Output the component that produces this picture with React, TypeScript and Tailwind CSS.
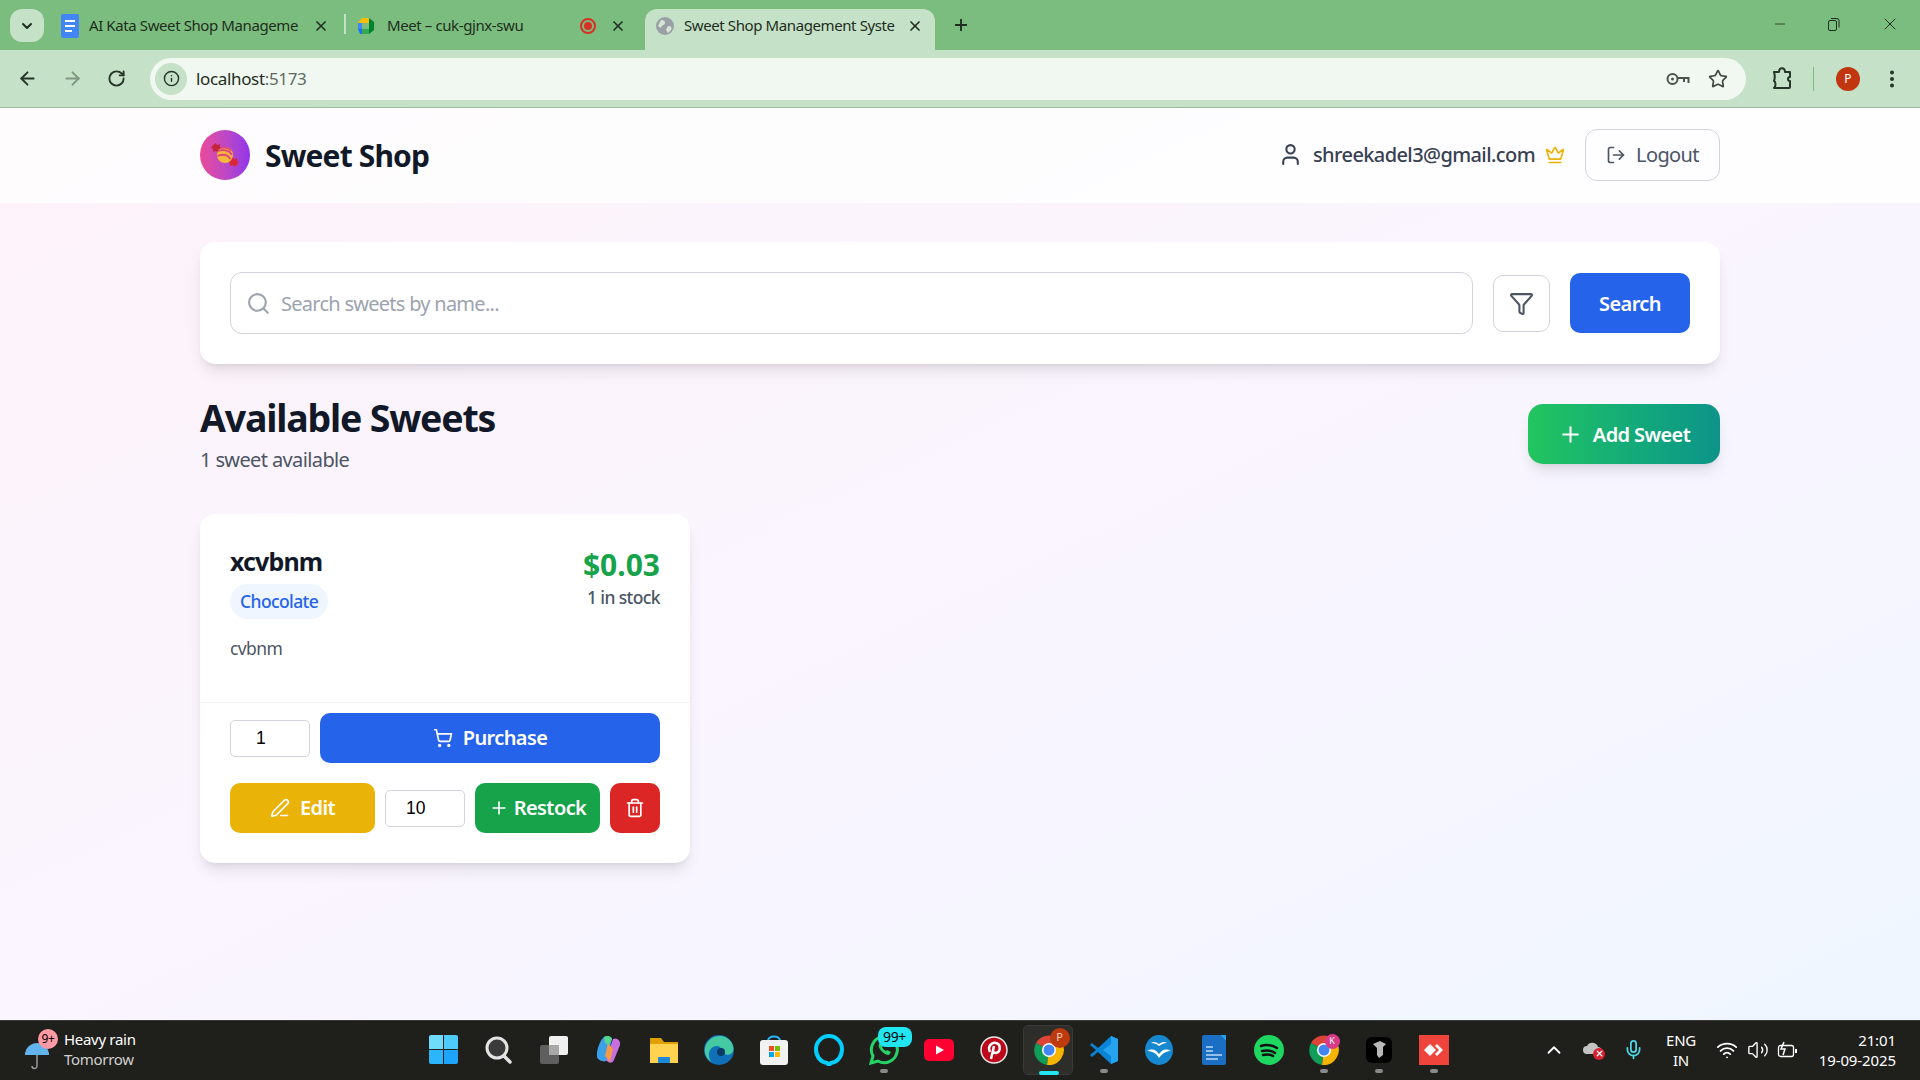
import { ArrowLeft, ArrowRight, ChevronDown, ChevronUp, Crown, Filter, Info, LogOut, Mic, Minus, MoreVertical, PenLine, Plus, RotateCw, Search, ShoppingCart, Star, Trash2, User, Volume2, Wifi, X } from "lucide-react";

const uiFont = { fontFamily: '"Noto Sans", sans-serif' };
const digitFont = { fontFamily: '"Liberation Sans", sans-serif' };

function Candy() {
  return (
    <svg width="30" height="30" viewBox="0 0 30 30">
      <path d="M3 5l3-2 1 2 3-1 0 3 3 2-4 5-3-3-3 1 0-3-2-1z" fill="#c2263f" />
      <path d="M27 25l-3 2-1-2-3 1 0-3-3-2 4-5 3 3 3-1 0 3 2 1z" fill="#d92638" />
      <circle cx="15" cy="15" r="8" fill="#f6b93b" />
      <path d="M8 11c5-2 11-1 14 4M7.500 16c5-2 10-2 13 3M11 8c4-1 8 0 10 3" stroke="#e0457b" strokeWidth="1.800" fill="none" />
    </svg>
  );
}

function TabsBar() {
  return (
    <div className="flex h-[50px] items-end bg-[#7bbd7e] pl-[10px] text-[15px] tracking-[-0.4px] text-[#1f2d20]">
      <div className="mb-[8px] flex h-[33px] w-[34px] items-center justify-center rounded-[12px] bg-[#c5e1c7]">
        <ChevronDown size={16} strokeWidth={3} />
      </div>
      <div className="flex h-[41px] w-[300px] items-center pb-[8px] pl-[17px]">
        <svg width="18" height="24" viewBox="0 0 18 24" className="shrink-0">
          <rect width="18" height="24" rx="2" fill="#4285f4" />
          <path d="M4 7h10M4 12h10M4 17h7" stroke="#fff" strokeWidth="2" />
        </svg>
        <span className="ml-[10px] w-[220px] whitespace-nowrap">AI Kata Sweet Shop Manageme</span>
        <X size={16} strokeWidth={2.5} className="ml-[4px]" />
      </div>
      <div className="mb-[16px] h-[20px] w-[2px] bg-[#c5e1c7]" />
      <div className="flex h-[41px] w-[299px] items-center pb-[8px] pl-[11px]">
        <svg width="18" height="18" viewBox="0 0 18 18" className="shrink-0">
          <path d="M5 1h7v5H1z" fill="#fbbc04" />
          <path d="M1 6h4v6H1z" fill="#4285f4" />
          <path d="M1 12h4v5H3z" fill="#1a73e8" />
          <path d="M5 12h7v5H5z" fill="#34a853" />
          <path d="M12 1v16l5-4V5z" fill="#00832d" />
        </svg>
        <span className="ml-[12px] w-[190px] whitespace-nowrap">Meet – cuk-gjnx-swu</span>
        <span className="ml-[3px] flex h-[16px] w-[16px] items-center justify-center rounded-full border-2 border-[#d93025]">
          <span className="h-[8px] w-[8px] rounded-full bg-[#d93025]" />
        </span>
        <X size={16} strokeWidth={2.5} className="ml-[14px]" />
      </div>
      <div className="flex h-[41px] w-[290px] items-center rounded-t-[12px] bg-[#c5e1c7] pb-[8px] pl-[11px]">
        <svg width="18" height="18" viewBox="0 0 18 18" className="shrink-0">
          <circle cx="9" cy="9" r="9" fill="#9aa0a6" />
          <path d="M5 3c3 0 4 1 4 3s-4 2-4 5l-3-2zM12 9c3 0 4 1 3 4l-3 3-2-3z" fill="#d5e6d6" />
        </svg>
        <span className="ml-[10px] w-[208px] whitespace-nowrap">Sweet Shop Management Syste</span>
        <X size={16} strokeWidth={2.5} className="ml-[15px]" />
      </div>
      <Plus size={18} strokeWidth={2.5} className="mb-[16px] ml-[17px]" />
      <div className="ml-auto flex h-[50px] items-center gap-[39px] pb-[2px] pr-[20px]">
        <Minus size={16} strokeWidth={1.2} />
        <svg width="14" height="14" viewBox="0 0 14 14" fill="none" stroke="#1f2d20">
          <rect x="1.5" y="3.5" width="8" height="10" rx="1.5" />
          <path d="M4 1.5h6a2 2 0 0 1 2 2v7" />
        </svg>
        <X size={20} strokeWidth={1.2} />
      </div>
    </div>
  );
}

function Toolbar() {
  return (
    <div className="flex h-[58px] items-center border-b border-[#9db8a0] bg-[#c5e1c7] text-[#26352a]">
      <div className="flex w-[150px] items-center gap-[24px] pl-[17px]">
        <ArrowLeft size={21} strokeWidth={2.2} />
        <ArrowRight size={21} strokeWidth={2.2} className="text-[#7f9683]" />
        <RotateCw size={19} strokeWidth={2.4} />
      </div>
      <div className="flex h-[42px] w-[1596px] items-center rounded-full bg-[#f1f8f2] pl-[5px] pr-[18px]">
        <span className="flex h-[32px] w-[32px] items-center justify-center rounded-full bg-[#c5e1c7]">
          <Info size={17} strokeWidth={2} />
        </span>
        <span className="ml-[9px] text-[17px] tracking-[-0.35px] text-[#1f2d20]">
          localhost<span className="text-[#5d6b60]">:5173</span>
        </span>
        <svg width="24" height="14" viewBox="0 0 24 14" fill="none" stroke="#4a524c" strokeWidth="2" className="ml-auto">
          <circle cx="6.500" cy="7" r="5" />
          <circle cx="6.500" cy="7" r="1.500" fill="#4a524c" stroke="none" />
          <path d="M11.500 6H22.500V11M18 6V10" />
        </svg>
        <Star size={20} strokeWidth={2} className="ml-[18px] text-[#3f4741]" />
      </div>
      <svg width="22" height="24" viewBox="0 0 22 24" fill="none" stroke="#26352a" strokeWidth="2" className="ml-[25px]">
        <path d="M3 5h5c0-5 6-5 6 0h5v5c-1 0-2 0-2 2s1 2 2 2v6a1 1 0 0 1-1 1H3c2-2 2-6 0-7 1-3 1-6 0-9z" strokeLinejoin="round" />
      </svg>
      <div className="ml-[20px] h-[24px] w-[1px] bg-[#7bbd7e]" />
      <span className="ml-[22px] flex h-[24px] w-[24px] items-center justify-center rounded-full bg-[#c1360f] text-[12px] text-white">P</span>
      <MoreVertical size={22} strokeWidth={2.4} className="ml-[21px]" />
    </div>
  );
}

function Shop() {
  return (
    <div className="flex-1 bg-gradient-to-br from-[#fdf2f8] via-[#faf5ff] to-[#eff6ff] tracking-[-0.6px] text-[#111827]">
      <header className="h-[95px] bg-white/80">
        <div className="mx-auto flex h-full w-[1520px] items-center pb-[2px]">
          <div className="flex h-[50px] w-[50px] items-center justify-center rounded-full bg-gradient-to-r from-[#ec4899] to-[#9333ea]">
            <Candy />
          </div>
          <h1 className="ml-[15px] mt-[2px] text-[30px] font-bold tracking-[-0.85px]">Sweet Shop</h1>
          <User size={25} strokeWidth={2} className="ml-auto text-[#374151]" />
          <span className="ml-[10px] mt-[1px] text-[20px] font-medium text-[#374151]">shreekadel3@gmail.com</span>
          <Crown size={20} strokeWidth={2} className="ml-[10px] text-[#eab308]" />
          <button className="ml-[20px] flex h-[52px] w-[135px] items-center justify-center gap-[10px] rounded-[12px] border border-[#d1d5db] text-[20px] text-[#4b5563]">
            <LogOut size={20} />
            <span className="mt-[1px]">Logout</span>
          </button>
        </div>
      </header>

      <main className="mx-auto w-[1520px] pt-[39px]">
        <section className="flex h-[122px] items-center rounded-[15px] bg-white px-[30px] shadow-lg">
          <div className="flex h-[62px] flex-1 items-center rounded-[12px] border border-[#d1d5db] pl-[15px]">
            <Search size={25} className="text-[#9ca3af]" />
            <span className="ml-[10px] mt-[1px] text-[20px] tracking-[-0.73px] text-[#9ca3af]">Search sweets by name...</span>
          </div>
          <button className="ml-[20px] flex h-[57px] w-[57px] items-center justify-center rounded-[10px] border border-[#d1d5db] text-[#4b5563]">
            <Filter size={25} />
          </button>
          <button className="ml-[20px] h-[60px] w-[120px] rounded-[10px] bg-[#2563eb] pt-[1px] text-[20px] font-semibold text-white">Search</button>
        </section>

        <div className="mt-[31px] flex items-start justify-between">
          <div>
            <h2 className="text-[37.5px] leading-[45px] font-bold tracking-[-1.2px]">Available Sweets</h2>
            <p className="mt-[5px] text-[20px] leading-[30px] tracking-[-0.62px] text-[#4b5563]">1 sweet available</p>
          </div>
          <button className="mt-[9px] flex h-[60px] w-[192px] items-center justify-center gap-[10px] rounded-[15px] bg-gradient-to-r from-[#22c55e] to-[#0d9488] text-[20px] font-semibold text-white shadow-lg">
            <Plus size={25} strokeWidth={2} />
            <span className="mt-[1px]">Add Sweet</span>
          </button>
        </div>

        <article className="mt-[39px] w-[490px] rounded-[15px] bg-white shadow-lg">
          <div className="flex h-[189px] justify-between border-b border-[#f3f4f6] px-[30px] pt-[30px]">
            <div>
              <h3 className="text-[25px] leading-[34px] font-bold tracking-[-0.88px]">xcvbnm</h3>
              <span className="mt-[6px] inline-block rounded-full bg-[#eff6ff] px-[10px] text-[17.5px] leading-[35px] font-medium text-[#2563eb]">Chocolate</span>
              <p className="mt-[15px] text-[17.5px] leading-[28px] text-[#4b5563]">cvbnm</p>
            </div>
            <div className="text-right">
              <div className="text-[30px] leading-[41px] font-bold tracking-normal text-[#16a34a]">$0.03</div>
              <div className="text-[17.5px] leading-[24px] font-medium text-[#4b5563]">1 in stock</div>
            </div>
          </div>
          <div className="px-[30px] pt-[10px] pb-[30px]">
            <div className="flex items-center gap-[10px]">
              <div className="flex h-[37px] w-[80px] items-center rounded-[5px] border border-[#d1d5db] pl-[25px] text-[17.5px] tracking-normal text-black" style={digitFont}>1</div>
              <button className="flex h-[50px] flex-1 items-center justify-center gap-[10px] rounded-[10px] bg-[#2563eb] text-[20px] font-semibold text-white">
                <ShoppingCart size={20} />
                Purchase
              </button>
            </div>
            <div className="mt-[20px] flex items-center gap-[10px]">
              <button className="flex h-[50px] w-[145px] items-center justify-center gap-[10px] rounded-[10px] bg-[#eab308] text-[20px] font-semibold text-white">
                <PenLine size={20} />
                Edit
              </button>
              <div className="flex h-[37px] w-[80px] items-center rounded-[5px] border border-[#d1d5db] pl-[20px] text-[17.5px] tracking-normal text-black" style={digitFont}>10</div>
              <button className="flex h-[50px] w-[125px] items-center justify-center gap-[5px] rounded-[10px] bg-[#16a34a] text-[20px] font-semibold text-white">
                <Plus size={20} />
                Restock
              </button>
              <button className="flex h-[50px] w-[50px] items-center justify-center rounded-[10px] bg-[#dc2626] text-white">
                <Trash2 size={20} />
              </button>
            </div>
          </div>
        </article>
      </main>
    </div>
  );
}

function Dot() {
  return <span className="absolute bottom-[-8px] left-1/2 h-[4px] w-[8px] -translate-x-1/2 rounded-full bg-[#8a8a8a]" />;
}

function TaskIcon({ children, dot }: { children: React.ReactNode; dot?: boolean }) {
  return (
    <div className="relative flex h-[59px] w-[55px] items-center justify-center pb-[2px]">
      <div className="relative flex h-[30px] w-[30px] items-center justify-center">
        {children}
        {dot && <Dot />}
      </div>
    </div>
  );
}

function ChromeLogo() {
  return (
    <svg width="30" height="30" viewBox="0 0 30 30">
      <path d="M15 15L2 8a15 15 0 0 1 26 0z" fill="#db4437" />
      <path d="M15 15L2 8a15 15 0 0 0 11 22z" fill="#0f9d58" />
      <path d="M15 15l13-7a15 15 0 0 1-15 22z" fill="#f4b400" />
      <circle cx="15" cy="15" r="7" fill="#fff" />
      <circle cx="15" cy="15" r="5.500" fill="#4285f4" />
    </svg>
  );
}

function Taskbar() {
  return (
    <footer className="flex h-[60px] items-center border-t border-[#3a3a3a] bg-[#1f1f1c] tracking-[-0.3px] text-white">
      <div className="flex w-[416px] items-center pb-[3px] pl-[24px]">
        <div className="relative h-[38px] w-[40px]">
          <svg width="26" height="28" viewBox="0 0 26 28" className="absolute top-[12px] left-0">
            <path d="M1 13a12 12 0 0 1 24 0z" fill="#63b3ed" />
            <path d="M13 13v11a2.500 2.500 0 0 1-5 0" stroke="#9a9a9a" strokeWidth="1.5" fill="none" />
          </svg>
          <span className="absolute top-[-1px] left-[14px] flex h-[20px] w-[20px] items-center justify-center rounded-full bg-[#ff99a4] text-[12px] leading-none text-black">9+</span>
        </div>
        <div className="text-[15px] leading-[20px]">
          <div>Heavy rain</div>
          <div className="text-[#d0d0d0]">Tomorrow</div>
        </div>
      </div>
      <div className="flex">
        <TaskIcon>
          <div className="grid grid-cols-2 gap-[1px]">
            <span className="h-[14px] w-[14px] rounded-tl-[2px] bg-[#6fdcfb]" />
            <span className="h-[14px] w-[14px] rounded-tr-[2px] bg-[#4fcbfa]" />
            <span className="h-[14px] w-[14px] rounded-bl-[2px] bg-[#2db5fb]" />
            <span className="h-[14px] w-[14px] rounded-br-[2px] bg-[#1ea4fb]" />
          </div>
        </TaskIcon>
        <TaskIcon>
          <svg width="30" height="30" viewBox="0 0 30 30" fill="none" stroke="#e4e4e4">
            <circle cx="13" cy="13" r="10" strokeWidth="3" fill="#3a3a3a" />
            <path d="M20 21l6 6" strokeWidth="3.500" strokeLinecap="round" />
          </svg>
        </TaskIcon>
        <TaskIcon>
          <svg width="30" height="30" viewBox="0 0 30 30">
            <rect x="1" y="10" width="19" height="19" rx="2" fill="#5f5f5f" />
            <rect x="10" y="1" width="19" height="19" rx="2" fill="#f0f0f0" />
            <rect x="10" y="10" width="10" height="10" fill="#a8a8a8" />
          </svg>
        </TaskIcon>
        <TaskIcon>
          <svg width="30" height="30" viewBox="0 0 30 30">
            <path d="M10 2c3-2 7-1 8 2l-5 21c-1 3-9 1-10-3-1-6 3-17 7-20z" fill="#3aa0e8" />
            <path d="M12 25c3 4 7 3 8 0l6-15c1-4-3-8-7-6z" fill="#c86fe0" />
            <path d="M11 21l3-13 5 6-3 13z" fill="#f2994a" />
            <path d="M10 2c3-2 7-1 8 2l-3 6-4-2z" fill="#58d68d" />
          </svg>
        </TaskIcon>
        <TaskIcon>
          <svg width="30" height="30" viewBox="0 0 30 30">
            <path d="M1 3h11l3 4h14v21H1z" fill="#e0a100" />
            <path d="M1 9h28v19H1z" fill="#ffd34f" />
            <rect x="9" y="22" width="12" height="6" rx="1" fill="#1e88d8" />
          </svg>
        </TaskIcon>
        <TaskIcon>
          <svg width="30" height="30" viewBox="0 0 30 30">
            <circle cx="15" cy="15" r="15" fill="#0f6fb8" />
            <path d="M1 13C3 3 14-2 23 3c6 4 8 11 5 15-3 3-10 2-11-2 2-5-7-8-11-1-2 4-1 8 1 12-4-3-7-8-6-14z" fill="#45c9a0" />
            <circle cx="17" cy="17" r="4" fill="#0b3a66" />
          </svg>
        </TaskIcon>
        <TaskIcon>
          <svg width="30" height="30" viewBox="0 0 30 30">
            <path d="M9 6c0-6 12-6 12 0" stroke="#29b6f6" strokeWidth="2" fill="none" />
            <rect x="1" y="5" width="28" height="25" rx="3" fill="#f2f2f2" />
            <rect x="10" y="11" width="5" height="5" fill="#f25022" />
            <rect x="16" y="11" width="5" height="5" fill="#7fba00" />
            <rect x="10" y="17" width="5" height="5" fill="#00a4ef" />
            <rect x="16" y="17" width="5" height="5" fill="#ffb900" />
          </svg>
        </TaskIcon>
        <TaskIcon>
          <svg width="30" height="32" viewBox="0 0 30 32" fill="none">
            <path d="M13 29C6 28 2 22 2 15 2 8 8 2 15 2s13 6 13 13c0 7-4 13-11 14l-2 2z" stroke="#00cfff" strokeWidth="4" />
          </svg>
        </TaskIcon>
        <TaskIcon dot>
          <svg width="30" height="30" viewBox="0 0 30 30">
            <path d="M2 28l2-7A13 13 0 1 1 9 26z" fill="none" stroke="#25d366" strokeWidth="3" />
            <path d="M10 9c-2 3 4 11 10 11l2-3-4-2-1 1c-2-1-3-2-4-4l1-1-2-4z" fill="#25d366" />
          </svg>
          <span className="absolute top-[-8px] left-[9px] flex h-[20px] w-[34px] items-center justify-center rounded-[8px] bg-[#21e6f2] text-[14px] leading-none text-black">99+</span>
        </TaskIcon>
        <TaskIcon>
          <svg width="30" height="22" viewBox="0 0 30 22">
            <rect width="30" height="22" rx="5" fill="#ff0033" />
            <path d="M12 6.500l8 4.500-8 4.500z" fill="#fff" />
          </svg>
        </TaskIcon>
        <TaskIcon>
          <svg width="28" height="28" viewBox="0 0 28 28">
            <circle cx="14" cy="14" r="13" fill="#bd081c" stroke="#e8e8e8" strokeWidth="1.500" />
            <path d="M10 16c-3-6 2-10 6-9 5 1 5 9 0 10-2 0-3-1-3-2M14 10l-3 13" stroke="#fff" strokeWidth="2.500" fill="none" />
          </svg>
        </TaskIcon>
        <div className="relative flex h-[59px] w-[55px] items-center justify-center pb-[2px]">
          <div className="absolute top-[4px] left-[2px] h-[50px] w-[50px] rounded-[5px] border border-[#3a3a3a] bg-[#2d2d2a]" />
          <div className="relative h-[30px] w-[30px]">
            <ChromeLogo />
            <span className="absolute top-[-7px] right-[-6px] flex h-[20px] w-[20px] items-center justify-center rounded-full bg-[#bd3a0f] text-[11px] text-[#f0d0c0]">P</span>
          </div>
          <span className="absolute bottom-[5px] left-[18px] h-[4px] w-[20px] rounded-full bg-[#21e6f2]" />
        </div>
        <TaskIcon dot>
          <svg width="30" height="30" viewBox="0 0 30 30">
            <path d="M22 1l7 3v22l-7 3L9 17l-6 5-2-2 6-5-6-5 2-2 6 5z" fill="#0a84d6" />
            <path d="M22 1l7 3v22l-7 3zM22 9l-8 6 8 6z" fill="#26a3ee" />
          </svg>
        </TaskIcon>
        <TaskIcon>
          <svg width="28" height="30" viewBox="0 0 28 30">
            <ellipse cx="14" cy="15" rx="14" ry="15" fill="#1688cf" />
            <path d="M2 16c6-3 9-1 12 3 3-4 6-6 12-3-5 0-8 2-12 7-3-5-7-7-12-7zM6 8c3-2 5-1 8 1 3-2 5-3 8-1-3 0-5 1-8 3-2-2-5-3-8-3z" fill="#fff" />
          </svg>
        </TaskIcon>
        <TaskIcon>
          <svg width="24" height="30" viewBox="0 0 24 30">
            <path d="M2 0h16l6 6v22a2 2 0 0 1-2 2H2a2 2 0 0 1-2-2V2a2 2 0 0 1 2-2z" fill="#1a6fc4" />
            <path d="M18 0h6v6z" fill="#26a3ee" />
            <path d="M4 12h7M4 16h7M4 20h16M4 24h12" stroke="#bcdcf5" strokeWidth="1.500" />
          </svg>
        </TaskIcon>
        <TaskIcon>
          <svg width="30" height="30" viewBox="0 0 30 30" fill="none">
            <circle cx="15" cy="15" r="15" fill="#1ed760" />
            <path d="M7 11c6-2 11-1 16 2M8 16c5-1 9-1 13 2M9 20c4-1 7-1 10 1" stroke="#111" strokeWidth="2.500" strokeLinecap="round" />
          </svg>
        </TaskIcon>
        <TaskIcon dot>
          <ChromeLogo />
          <span className="absolute top-[-1px] right-[-1px] flex h-[15px] w-[15px] items-center justify-center rounded-full bg-[#d93a86] text-[9px]">K</span>
        </TaskIcon>
        <TaskIcon dot>
          <svg width="28" height="30" viewBox="0 0 28 30">
            <rect x="1" y="2" width="26" height="26" rx="6" fill="#000" />
            <path d="M8 9l7-3 6 3-3 3v8l-4 3-2-3v-7z" fill="#b8b8b8" />
          </svg>
        </TaskIcon>
        <TaskIcon dot>
          <svg width="30" height="30" viewBox="0 0 30 30">
            <rect width="30" height="30" fill="#ef443b" />
            <path d="M11 9l6 6-6 6-6-6z" fill="#fff" />
            <path d="M18 9l6 6-6 6-2-2 4-4-4-4z" fill="#fff" />
          </svg>
        </TaskIcon>
      </div>
      <div className="ml-auto flex items-center pb-[2px] pr-[24px]">
        <ChevronUp size={22} strokeWidth={2} />
        <div className="relative ml-[18px] h-[20px] w-[22px]">
          <svg width="20" height="14" viewBox="0 0 20 14" className="absolute top-[1px] left-0">
            <path d="M4 13a4 4 0 0 1 0-8 6 6 0 0 1 11 1 3 3 0 0 1 0 7z" fill="#c4c4c4" />
          </svg>
          <span className="absolute top-[8px] left-[10px] flex h-[12px] w-[12px] items-center justify-center rounded-full bg-[#d8202f]">
            <X size={9} strokeWidth={3.500} />
          </span>
        </div>
        <Mic size={21} strokeWidth={2} className="ml-[18px] text-[#4fd8e4]" />
        <div className="ml-[17px] w-[40px] text-center text-[15px] leading-[20px]">
          <div>ENG</div>
          <div>IN</div>
        </div>
        <Wifi size={22} strokeWidth={2} className="ml-[15px]" />
        <Volume2 size={22} strokeWidth={1.500} className="ml-[9px]" />
        <svg width="22" height="18" viewBox="0 0 22 18" fill="none" stroke="#fff" strokeWidth="1.300" className="ml-[8px]">
          <rect x="1.500" y="4.500" width="15" height="11" rx="2" />
          <path d="M19 8v4" strokeWidth="2" />
          <path d="M7 1L4 8h4l-2 6" strokeWidth="1.500" />
        </svg>
        <div className="ml-[17px] w-[80px] whitespace-nowrap text-right text-[15px] leading-[20px] tracking-[-0.1px]">
          <div>21:01</div>
          <div>19-09-2025</div>
        </div>
      </div>
    </footer>
  );
}

export default function App() {
  return (
    <div className="flex h-[1080px] w-[1920px] flex-col overflow-hidden" style={uiFont}>
      <TabsBar />
      <Toolbar />
      <Shop />
      <Taskbar />
    </div>
  );
}
